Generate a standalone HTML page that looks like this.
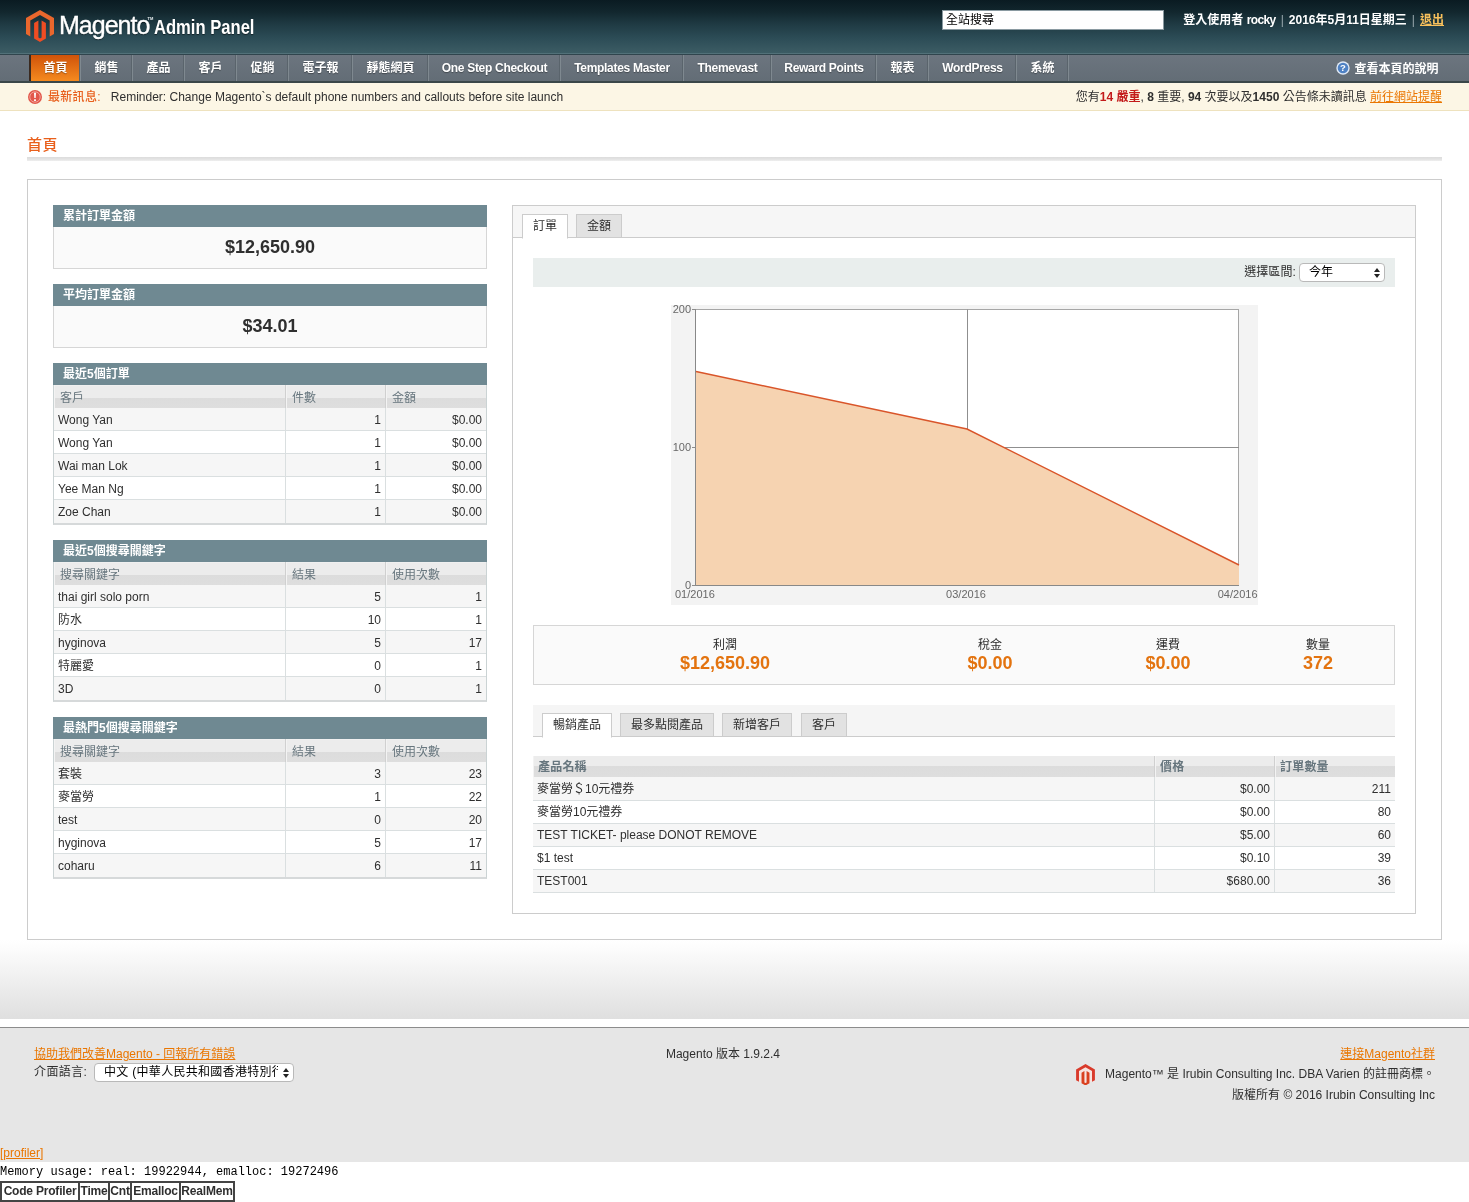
<!DOCTYPE html>
<html lang="zh-Hant">
<head>
<meta charset="utf-8">
<title>首頁 / Magento Admin</title>
<style>
*{box-sizing:border-box;margin:0;padding:0}
html,body{width:1469px;height:1202px;overflow:hidden;background:#fff}
body{font-family:"Liberation Sans","Noto Sans CJK TC",sans-serif;font-size:12px;line-height:15px;color:#2f2f2f;position:relative;will-change:transform}
a{color:#ea7601;text-decoration:underline}
.abs{position:absolute}
/* header */
#hdr{position:absolute;left:0;top:0;width:1469px;height:53px;background:linear-gradient(#0a1b22 0,#12272e 12px,#1f3a43 24px,#2c4c56 38px,#3c5c64 53px)}
#logo-ico{position:absolute;left:26px;top:10px;width:28px;height:32px}
#logo-t1{position:absolute;left:59px;top:8px;font-size:25px;line-height:34px;color:#fff;letter-spacing:-1px;-webkit-text-stroke:.35px #fff;text-shadow:0 1px 1px rgba(0,0,0,.5)}
#logo-tm{position:absolute;left:147.5px;top:16px;font-size:4px;line-height:5px;color:#e8eef0;font-weight:bold}
#logo-t2{position:absolute;left:154px;top:12px;font-size:21px;line-height:30px;color:#fff;font-weight:bold;transform:scaleX(.79);transform-origin:0 50%;white-space:nowrap;text-shadow:0 1px 1px rgba(0,0,0,.5)}
#gsearch{position:absolute;left:942px;top:10px;width:222px;height:20px;background:#fff;border:1px solid #8a9aa1;font-size:12px;line-height:19px;padding-left:3px;color:#000}
#hdr-r{position:absolute;right:25px;top:12px;font-size:12px;line-height:16px;color:#fff;font-weight:bold;white-space:nowrap}
#hdr-r .sep{color:#9aa9ae;font-weight:normal;margin:0 5px}
#hdr-r a{color:#f9c15c;font-weight:bold}
/* nav */
#nav{position:absolute;left:0;top:53px;width:1469px;height:30px;background:linear-gradient(#6c757f,#636d76);border-top:1px solid #527179;border-bottom:2px solid #3a4749;box-shadow:inset 0 1px 0 #30454d}
#nav ul{list-style:none;position:absolute;left:29px;top:1px;height:26px;white-space:nowrap;display:flex}
#nav li{height:26px;box-shadow:inset -2px 0 0 -1px #5a646c;padding:0;text-align:center;line-height:26px;color:#fff;font-weight:bold;font-size:12px;border-right:1px solid #7f8990;text-shadow:0 1px 1px rgba(0,0,0,.35)}
#nav li.act{background:linear-gradient(#d0530a,#f58a1f);border-left:2px solid #3a2a20}
#help{position:absolute;right:30.5px;top:55px;height:28px;line-height:28px;color:#fff;font-weight:bold;font-size:12px}
/* notif */
#notif{position:absolute;left:0;top:83px;width:1469px;height:28px;background:#fcf6e5;border-bottom:1px solid #eee2be;font-size:12px;line-height:29px}
#notif .l{position:absolute;left:48px;top:0;white-space:nowrap}
#notif .l b{color:#e8611f;letter-spacing:.3px;font-weight:500}
#notif .r{position:absolute;right:27px;top:0;white-space:nowrap}
#notif .crit{color:#c31a1a;font-weight:bold}
/* title */
#ttl{position:absolute;left:27px;top:135px;font-size:15px;line-height:20px;color:#e9601c;font-weight:500;letter-spacing:.5px}
#ttl-line{position:absolute;left:27px;top:157px;width:1415px;height:4px;background:linear-gradient(#dcdcdc,#e4e4e4 60%,#efefef)}
#dash{position:absolute;left:27px;top:179px;width:1415px;height:761px;border:1px solid #ccc;background:#fff}

/* left column */
.box{position:absolute;left:25px;width:434px}
.box .hd{height:22px;background:#6f8992;color:#fff;font-weight:bold;font-size:12px;line-height:23px;padding-left:10px;letter-spacing:0}
.box .amt{height:42px;background:#fafafa;border:1px solid #d6d6d6;border-top:0;text-align:center;font-size:18px;line-height:41px;font-weight:bold;color:#2f2f2f}
table{border-collapse:separate;border-spacing:0;table-layout:fixed}
.grid{width:100%;border:1px solid #cbd3d4;border-top:0;border-bottom:2px solid #d6d9da}
.grid th{height:23px;background:repeating-conic-gradient(#e4e4e4 0 25%,#ececec 0 50%) 0 0/2px 2px;background:linear-gradient(#f4f4f4 0,#ececec 1px,#ececec 13px,#dcdcdc 13px,#dedede 100%);color:#67767e;font-weight:normal;text-align:left;padding:3px 5px 0;font-size:12px;line-height:19px;border-left:1px solid #f3f3f3;border-right:1px solid #d0d0d0;white-space:nowrap}
.grid td{height:23px;padding:2px 4px 0;font-size:12px;line-height:20px;border-bottom:1px solid #dadfe0;border-right:1px solid #dadfe0;white-space:nowrap;color:#2f2f2f}
.grid tr:last-child td{border-bottom:0;padding-top:1px;line-height:22px}
.grid td:last-child,.grid th:last-child{border-right:0}
.grid tr.e td{background:#f6f6f6}
.grid .n{text-align:right}

/* right column */
#rbox{position:absolute;left:484px;top:25px;width:904px;height:709px;border:1px solid #ccc;background:#fff}
.tabbar{position:absolute;left:0;top:0;width:902px;height:32px;background:#f6f6f6;border-bottom:1px solid #ccc}
.tab{position:absolute;height:24px;border:1px solid #ccc;background:#e2e2e2;font-size:12px;line-height:22px;text-align:center;color:#2f2f2f}
.tab.on{background:#fff;border-bottom-color:#fff;height:25px}
#range{position:absolute;left:20px;top:52px;width:862px;height:29px;background:#e9eeed}
#range span{position:absolute;right:99px;top:0;line-height:29px;font-size:12px;letter-spacing:.1px}
.sel{position:absolute;background:#fff;border:1px solid #b9b9b9;border-radius:4px;font-size:13px;color:#000;white-space:nowrap;overflow:hidden}
.sel span{position:static!important;display:block;overflow:hidden;white-space:nowrap;letter-spacing:inherit!important;line-height:inherit!important}
.sel i{position:absolute;right:4px;top:50%;width:6px;height:10px;margin-top:-5px}
#chart{position:absolute;left:158px;top:99px;width:587px;height:300px}
#totals{position:absolute;left:20px;top:419px;width:862px;height:60px;background:#fafafa;border:1px solid #d6d6d6}
#totals div{position:absolute;top:12px;width:200px;margin-left:-100px;text-align:center;font-size:12px;line-height:15px;color:#2f2f2f}
#totals b{display:block;font-size:18px;line-height:20px;color:#e3730f}
#tabbar2{position:absolute;left:20px;top:499px;width:862px;height:32px;background:#f5f5f5;border-bottom:1px solid #ccc}
#g2{position:absolute;left:20px;top:550px;width:862px}
#g2 th{height:21px;padding:2px 4px 0;line-height:19px;background:linear-gradient(#ececec 0,#ececec 10px,#dcdcdc 10px,#dedede 100%);font-weight:bold;letter-spacing:.2px}
#g2 td{padding-top:1px;line-height:21px}
#g2 tr:nth-child(2) td{height:24px;padding-top:2px}
#g2 tr:last-child td{height:22px;padding-top:0;line-height:22px}
#g2 .grid{border-left:0;border-right:0;border-bottom:1px solid #dadfe0}

/* footer */
#fgrad{position:absolute;left:0;top:940px;width:1469px;height:79px;background:linear-gradient(#fff 0,#fdfdfd 8%,#dfdfdf 100%)}
#fline{position:absolute;left:0;top:1027px;width:1469px;height:2px;background:linear-gradient(#8c8c8c 0,#8c8c8c 50%,#c8c8c8 50%,#c8c8c8 100%)}
#foot{position:absolute;left:0;top:1028px;width:1469px;height:134px;background:#e6e6e6;font-size:12px;color:#2f2f2f}
#foot .a{position:absolute;white-space:nowrap;line-height:16px}
#prof{position:absolute;left:0;top:1162px;width:1469px;height:40px;background:#fff}
#prof pre{position:absolute;left:0;top:3px;font-family:"Liberation Mono",monospace;font-size:12px;line-height:15px;color:#000}
#prof table{position:absolute;left:0;top:19px;border-collapse:separate;border-spacing:0;border:1px solid #444;table-layout:fixed;width:235px}
#prof th{border:1px solid #444;font-weight:bold;font-size:12px;line-height:15px;padding:1px 0;color:#2f2f2f;height:19px;text-align:center;white-space:nowrap;overflow:hidden;letter-spacing:-.2px}
</style>
</head>
<body>
<div id="hdr">
<svg id="logo-ico" viewBox="0 0 28 32"><path d="M14 0L28 8V24L23.7 26.5V10.6L14 5L4.3 10.6V26.5L0 24V8Z" fill="#ea672d"/><path d="M8.1 13L12.4 10.5V27.5L14 28.4L15.6 27.5V10.5L19.9 13V28.5L14 32L8.1 28.5Z" fill="#f04d23"/></svg>
<div id="logo-t1">Magento</div><div id="logo-tm">TM</div>
<div id="logo-t2">Admin Panel</div>
<div id="gsearch">全站搜尋</div>
<div id="hdr-r">登入使用者 <span style="letter-spacing:-.6px">rocky</span><span class="sep">|</span>2016年5月11日星期三<span class="sep">|</span><a>退出</a></div>
</div>
<div id="nav"><ul>
<li class="act" style="width:52px">首頁</li><li style="width:52px">銷售</li><li style="width:52px">產品</li><li style="width:52px">客戶</li><li style="width:52px">促銷</li><li style="width:64px">電子報</li><li style="width:76px">靜態網頁</li><li style="width:132px;letter-spacing:-.3px">One Step Checkout</li><li style="width:123px;letter-spacing:-.3px">Templates Master</li><li style="width:88px;letter-spacing:-.3px">Themevast</li><li style="width:105px;letter-spacing:-.3px">Reward Points</li><li style="width:52px">報表</li><li style="width:88px;letter-spacing:-.3px">WordPress</li><li style="width:52px">系統</li>
</ul></div>
<svg class="abs" style="left:1336px;top:61px;width:14px;height:14px" viewBox="0 0 14 14"><circle cx="7" cy="7" r="6.7" fill="#dfe9f6"/><circle cx="7" cy="7" r="5.3" fill="#4f82c4"/><text x="7" y="10.4" text-anchor="middle" font-size="9.5" font-weight="bold" fill="#fff" font-family="Liberation Sans, sans-serif">?</text></svg>
<div id="help">查看本頁的說明</div>
<div id="notif">
<svg class="abs" style="left:28px;top:6.5px;width:14px;height:14px" viewBox="0 0 14 14"><circle cx="7" cy="7" r="7" fill="#e2574b"/><circle cx="7" cy="7" r="5.2" fill="none" stroke="#f4a9a0" stroke-width=".9"/><path d="M6 2.8h2l-.35 5.2h-1.3zM6.1 9.2h1.8v1.8h-1.8z" fill="#fff"/></svg>
<div class="l"><b>最新訊息:</b>&nbsp;&nbsp; Reminder: Change Magento`s default phone numbers and callouts before site launch</div>
<div class="r">您有<span class="crit">14 嚴重</span>, <b>8</b> 重要, <b>94</b> 次要以及<b>1450</b> 公告條未讀訊息 <a>前往網站提醒</a></div>
</div>
<div id="ttl">首頁</div>
<div id="ttl-line"></div>
<div id="dash">
<div class="box" style="top:25px"><div class="hd">累計訂單金額</div><div class="amt">$12,650.90</div></div>
<div class="box" style="top:104px"><div class="hd">平均訂單金額</div><div class="amt">$34.01</div></div>
<div class="box" style="top:183px"><div class="hd">最近5個訂單</div><table class="grid"><colgroup><col style="width:232px"><col style="width:100px"><col style="width:100px"></colgroup><tr><th>客戶</th><th>件數</th><th>金額</th></tr><tr class="e"><td>Wong Yan</td><td class="n">1</td><td class="n">$0.00</td></tr><tr><td>Wong Yan</td><td class="n">1</td><td class="n">$0.00</td></tr><tr class="e"><td>Wai man Lok</td><td class="n">1</td><td class="n">$0.00</td></tr><tr><td>Yee Man Ng</td><td class="n">1</td><td class="n">$0.00</td></tr><tr class="e"><td>Zoe Chan</td><td class="n">1</td><td class="n">$0.00</td></tr></table></div>
<div class="box" style="top:360px"><div class="hd">最近5個搜尋關鍵字</div><table class="grid"><colgroup><col style="width:232px"><col style="width:100px"><col style="width:100px"></colgroup><tr><th>搜尋關鍵字</th><th>結果</th><th>使用次數</th></tr><tr class="e"><td>thai girl solo porn</td><td class="n">5</td><td class="n">1</td></tr><tr><td>防水</td><td class="n">10</td><td class="n">1</td></tr><tr class="e"><td>hyginova</td><td class="n">5</td><td class="n">17</td></tr><tr><td>特麗愛</td><td class="n">0</td><td class="n">1</td></tr><tr class="e"><td>3D</td><td class="n">0</td><td class="n">1</td></tr></table></div>
<div class="box" style="top:537px"><div class="hd">最熱門5個搜尋關鍵字</div><table class="grid"><colgroup><col style="width:232px"><col style="width:100px"><col style="width:100px"></colgroup><tr><th>搜尋關鍵字</th><th>結果</th><th>使用次數</th></tr><tr class="e"><td>套裝</td><td class="n">3</td><td class="n">23</td></tr><tr><td>麥當勞</td><td class="n">1</td><td class="n">22</td></tr><tr class="e"><td>test</td><td class="n">0</td><td class="n">20</td></tr><tr><td>hyginova</td><td class="n">5</td><td class="n">17</td></tr><tr class="e"><td>coharu</td><td class="n">6</td><td class="n">11</td></tr></table></div>

<div id="rbox">
<div class="tabbar"></div>
<div class="tab on" style="left:9px;top:8px;width:46px">訂單</div>
<div class="tab" style="left:63px;top:8px;width:46px">金額</div>
<div id="range"><span>選擇區間:</span><div class="sel" style="left:766px;top:5px;width:86px;height:19px;line-height:17px;padding-left:9px;font-size:12px">今年<i><svg viewBox="0 0 6 10" width="6" height="10" style="display:block"><path d="M3 0L6 4H0ZM3 10L0 6H6Z" fill="#222"/></svg></i></div></div>
<svg id="chart" viewBox="0 0 587 300" font-family="Liberation Sans, sans-serif" font-size="11" fill="#686868">
<rect x="0" y="0" width="587" height="300" fill="#f3f3f3"/>
<rect x="24.5" y="4.5" width="543" height="276" fill="#fff" stroke="#a6a6a6" stroke-width="1"/>
<path d="M296.5 4.5V281M25 142.5H568" stroke="#8f8f8f" stroke-width="1" fill="none"/>
<path d="M25 66.5L296 124L568 260V281H25Z" fill="#f6d3b1"/>
<path d="M25 66.5L296 124L568 260" fill="none" stroke="#d9552a" stroke-width="1.4"/>
<path d="M24.5 4V280.5H568" stroke="#888" stroke-width="1" fill="none"/>
<path d="M21 4.5h4M21 142.5h4M21 280.5h4" stroke="#8c8c8c" stroke-width="1"/>
<text x="20" y="8" text-anchor="end">200</text>
<text x="20" y="146" text-anchor="end">100</text>
<text x="20" y="284" text-anchor="end">0</text>
<text x="4" y="293">01/2016</text>
<text x="295" y="293" text-anchor="middle">03/2016</text>
<text x="586.5" y="293" text-anchor="end">04/2016</text>
</svg>
<div id="totals">
<div style="left:191px">利潤<b>$12,650.90</b></div>
<div style="left:456px">稅金<b>$0.00</b></div>
<div style="left:634px">運費<b>$0.00</b></div>
<div style="left:784px">數量<b>372</b></div>
</div>
<div id="tabbar2"></div>
<div class="tab on" style="left:29px;top:507px;width:70px">暢銷產品</div>
<div class="tab" style="left:107px;top:507px;width:94px">最多點閱產品</div>
<div class="tab" style="left:209px;top:507px;width:70px">新增客戶</div>
<div class="tab" style="left:288px;top:507px;width:46px">客戶</div>
<div id="g2"><table class="grid"><colgroup><col style="width:622px"><col style="width:120px"><col style="width:120px"></colgroup>
<tr><th>產品名稱</th><th>價格</th><th>訂單數量</th></tr>
<tr class="e"><td>麥當勞＄10元禮券</td><td class="n">$0.00</td><td class="n">211</td></tr>
<tr><td>麥當勞10元禮券</td><td class="n">$0.00</td><td class="n">80</td></tr>
<tr class="e"><td>TEST TICKET- please DONOT REMOVE</td><td class="n">$5.00</td><td class="n">60</td></tr>
<tr><td>$1 test</td><td class="n">$0.10</td><td class="n">39</td></tr>
<tr class="e"><td>TEST001</td><td class="n">$680.00</td><td class="n">36</td></tr>
</table></div>
</div>
</div>
<div id="fgrad"></div><div id="fline"></div>
<div id="foot">
<a class="a" style="left:34px;top:18px">協助我們改善Magento - 回報所有錯誤</a>
<div class="a" style="left:34px;top:36px;letter-spacing:.4px">介面語言:</div>
<div class="sel" style="left:94px;top:35px;width:200px;height:19px;line-height:17px;padding-left:9px;letter-spacing:.3px;font-size:12px"><span style="width:174px">中文 (中華人民共和國香港特別行政區)</span><i><svg viewBox="0 0 6 10" width="6" height="10" style="display:block"><path d="M3 0L6 4H0ZM3 10L0 6H6Z" fill="#222"/></svg></i></div>
<div class="a" style="left:623px;top:18px;width:200px;text-align:center">Magento 版本 1.9.2.4</div>
<a class="a" style="right:34px;top:18px">連接Magento社群</a>
<svg class="abs" style="left:1076px;top:35.5px;width:19px;height:21.5px" viewBox="0 0 28 32"><path d="M14 1L27 8.5V24L14 31.5L1 24V8.5Z" fill="#f7e3df"/><path d="M14 0L28 8V24L23.7 26.5V10.6L14 5L4.3 10.6V26.5L0 24V8Z" fill="#d93a2b"/><path d="M8.1 13L12.4 10.5V27.5L14 28.4L15.6 27.5V10.5L19.9 13V28.5L14 32L8.1 28.5Z" fill="#d9401f"/></svg>
<div class="a" style="right:34px;top:38px">Magento™ 是 Irubin Consulting Inc. DBA Varien 的註冊商標。</div>
<div class="a" style="right:34px;top:59px">版權所有 © 2016 Irubin Consulting Inc</div>
<a class="a" style="left:0;top:117px">[profiler]</a>
</div>
<div id="prof"><pre>Memory usage: real: 19922944, emalloc: 19272496</pre>
<table><tr><th style="width:78px">Code Profiler</th><th style="width:30px">Time</th><th style="width:22px">Cnt</th><th style="width:49px">Emalloc</th><th style="width:54px">RealMem</th></tr></table></div>
</body>
</html>
